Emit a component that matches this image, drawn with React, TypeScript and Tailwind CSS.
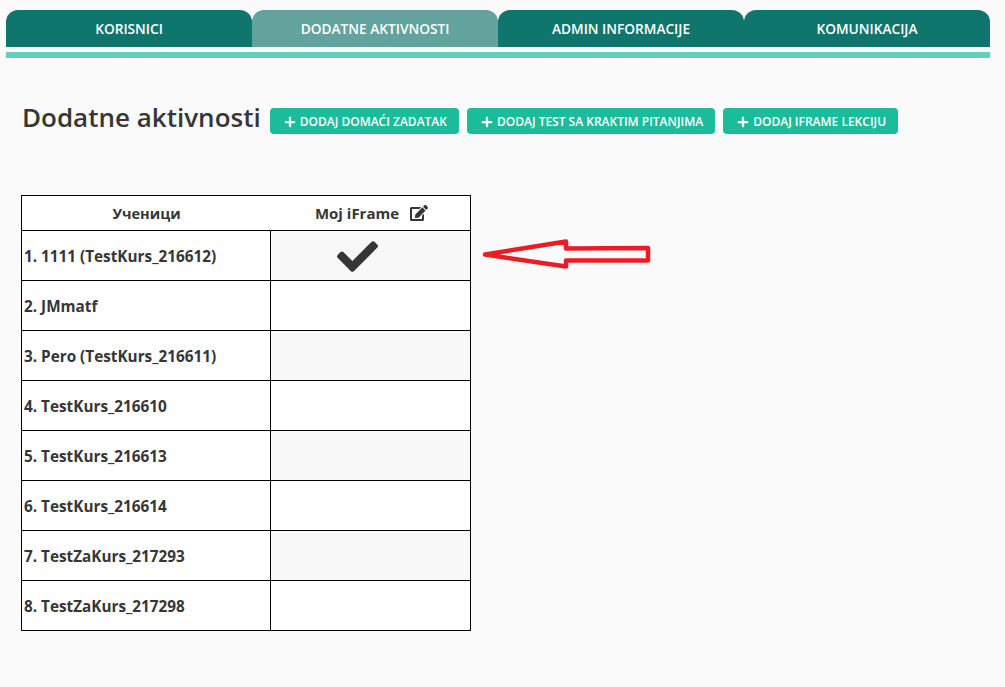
import { FaCheck, FaEdit, FaPlus } from 'react-icons/fa';

const tabs = [
  { label: 'KORISNICI', active: false },
  { label: 'DODATNE AKTIVNOSTI', active: true },
  { label: 'ADMIN INFORMACIJE', active: false },
  { label: 'KOMUNIKACIJA', active: false },
];

const actions = ['DODAJ DOMAĆI ZADATAK', 'DODAJ TEST SA KRAKTIM PITANJIMA', 'DODAJ IFRAME LEKCIJU'];

const students = [
  '1. 1111 (TestKurs_216612)',
  '2. JMmatf',
  '3. Pero (TestKurs_216611)',
  '4. TestKurs_216610',
  '5. TestKurs_216613',
  '6. TestKurs_216614',
  '7. TestZaKurs_217293',
  '8. TestZaKurs_217298',
];

export default function App() {
  return (
    <div className="relative h-[687px] w-[1005px] overflow-hidden bg-[#fafafa] font-['Open_Sans',sans-serif] text-[#363636]">
      <div className="ml-[6px] w-[984px] pt-[10px]">
        <div className="flex h-[37px]">
          {tabs.map((tab) => (
            <div
              key={tab.label}
              className={`flex flex-1 items-center justify-center rounded-t-[12px] pt-[1px] text-[13.7px] font-semibold text-white ${
                tab.active ? 'bg-[#62a39d]' : 'bg-[#0f766e]'
              }`}
            >
              {tab.label}
            </div>
          ))}
        </div>
        <div className="mt-[5px] h-[6px] bg-[#62d0ba]" />
      </div>

      <div className="mt-[50px] ml-[22px] flex h-[26px] items-center">
        <h1 className="mb-[8px] text-[26px] leading-none font-semibold text-[#363636]">Dodatne aktivnosti</h1>
        <div className="ml-[9px] flex gap-2">
          {actions.map((action) => (
            <button
              key={action}
              className="flex h-[26px] items-center gap-[4px] rounded-[4px] bg-[#1abc9c] pt-[1px] pr-[12px] pl-[14px] text-[12px] font-semibold text-white"
            >
              <FaPlus className="h-[12px] w-[12px]" />
              {action}
            </button>
          ))}
        </div>
      </div>

      <div className="mt-[61px] ml-[21px] w-[450px] border border-black bg-white text-[15.3px] font-bold">
        <div className="flex h-[34px]">
          <div className="flex w-[249px] items-center justify-center pt-[1px] text-[14.5px]">Ученици</div>
          <div className="flex flex-1 items-center justify-center gap-[11px] pl-[2px] text-[15px]">
            Moj iFrame
            <FaEdit className="h-[16px] w-[18px]" />
          </div>
        </div>
        {students.map((name, index) => (
          <div key={name} className="flex h-[50px] border-t border-black">
            <div className="flex w-[249px] items-center border-r border-black pt-[2px] pl-[2px]">{name}</div>
            <div className={`flex flex-1 items-center justify-center pt-[1px] pr-[26px] ${index % 2 === 0 ? 'bg-[#f8f8f8]' : 'bg-white'}`}>
              {index === 0 && <FaCheck className="h-[41px] w-[41px]" />}
            </div>
          </div>
        ))}
      </div>

      <svg className="absolute top-[230px] left-[470px]" width="190" height="50" viewBox="0 0 190 50" fill="none">
        <path
          d="M15 24.5 L96 11.5 L96 18.5 L178 18 L178 30.5 L96 30.5 L96 36.5 Z"
          stroke="#ed1c24"
          strokeWidth="4.5"
          strokeLinejoin="round"
        />
      </svg>
    </div>
  );
}
